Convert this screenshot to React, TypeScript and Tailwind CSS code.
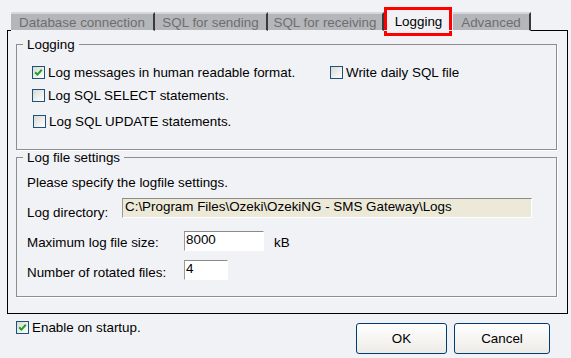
import type { ReactNode } from 'react';

const TABS = [
  { label: 'Database connection', w: 'w-[144px]' },
  { label: 'SQL for sending', w: 'w-[113px]' },
  { label: 'SQL for receiving', w: 'w-[116px]' },
  { label: 'Logging', w: 'w-[69px]', active: true },
  { label: 'Advanced', w: 'w-[78px]' },
];

function Box({ checked }: { checked?: boolean }) {
  return (
    <span className="flex h-[13px] w-[13px] shrink-0 items-center justify-center border border-[#1c5180] bg-linear-to-br from-[#d9d9d3] to-white">
      {checked && (
        <svg width="9" height="9" viewBox="0 0 9 9">
          <path d="M1.2 4.2 L3.4 6.6 L7.8 1.8" stroke="#21a121" strokeWidth="2" fill="none" />
        </svg>
      )}
    </span>
  );
}

function CheckRow({ checked, children, className = '' }: { checked?: boolean; children: ReactNode; className?: string }) {
  return (
    <label className={`flex h-[15px] items-center gap-[3px] ${className}`}>
      <Box checked={checked} />
      <span className="whitespace-nowrap">{children}</span>
    </label>
  );
}

function Field({ children, className = '' }: { children: ReactNode; className?: string }) {
  return (
    <div
      className={`h-[20px] overflow-hidden whitespace-nowrap border-t border-l border-t-[#8a8a8a] border-l-[#9a9a9a] border-r border-b border-r-white border-b-white pl-[1px] leading-[15px] ${className}`}
    >
      {children}
    </div>
  );
}

function Button({ children, className = '' }: { children: ReactNode; className?: string }) {
  return (
    <button
      type="button"
      className={`h-[31px] rounded-[3px] border border-[#003c74] bg-linear-to-b from-white to-[#ecebe6] text-[13.4px] text-black ${className}`}
    >
      {children}
    </button>
  );
}

export default function App() {
  return (
    <div className="relative flex h-[358px] w-[571px] flex-col overflow-hidden bg-[#f1f2f6] pl-[7px] pr-[3px] pt-[12px] font-['Liberation_Sans',Arial,sans-serif] text-[13.4px] leading-[15px] text-black">
      {/* Tabs */}
      <div className="relative z-10 -mb-px ml-[4px] flex h-[19px]">
        {TABS.map((t) =>
          t.active ? (
            <div key={t.label} className={`${t.w} flex items-center justify-center border-b border-b-[#f1f2f6]`}>
              {t.label}
            </div>
          ) : (
            <div
              key={t.label}
              className={`${t.w} flex items-center justify-center border-t-2 border-r-2 border-b border-t-[#d6d7db] border-r-[#3a3a3a] border-b-[#f1f2f6] bg-[#b5b6ba] text-[#6e6e6e]`}
            >
              {t.label}
            </div>
          ),
        )}
      </div>

      {/* Panel */}
      <div className="h-[284px] border border-black pl-[8px] pr-[10px] pt-[6px]">
        <fieldset className="h-[113px] border border-[#8e8e8e] shadow-[1px_1px_0_#fff]">
          <legend className="ml-[6px] px-[4px] leading-[15px]">Logging</legend>
          <div className="flex pl-[15px] pt-[13px]">
            <div className="flex w-[298px] flex-col">
              <CheckRow checked>Log messages in human readable format.</CheckRow>
              <CheckRow className="mt-[8px]">Log SQL SELECT statements.</CheckRow>
              <CheckRow className="mt-[11px] pl-[1px]">Log SQL UPDATE statements.</CheckRow>
            </div>
            <div className="flex flex-col">
              <CheckRow>Write daily SQL file</CheckRow>
            </div>
          </div>
        </fieldset>

        <fieldset className="h-[147px] border border-[#8e8e8e] shadow-[1px_1px_0_#fff]">
          <legend className="ml-[6px] px-[4px] leading-[15px]">Log file settings</legend>
          <div className="flex flex-col pl-[10px] pt-[10px]">
            <p>Please specify the logfile settings.</p>
            <div className="mt-[8px] flex items-start">
              <span className="w-[95px] pt-[7px]">Log directory:</span>
              <Field className="w-[410px] bg-[#ece9d8] pl-[2px]">C:\Program Files\Ozeki\OzekiNG - SMS Gateway\Logs</Field>
            </div>
            <div className="mt-[11px] flex items-start">
              <span className="w-[157px] pt-[4px]">Maximum log file size:</span>
              <Field className="w-[80px] bg-white">8000</Field>
              <span className="ml-[10px] pt-[4px]">kB</span>
            </div>
            <div className="mt-[9px] flex items-start">
              <span className="w-[157px] pt-[5px]">Number of rotated files:</span>
              <Field className="h-[19px] w-[44px] bg-white">4</Field>
            </div>
          </div>
        </fieldset>
      </div>

      {/* Footer */}
      <div className="ml-[9px] flex items-start justify-between pr-[18px]">
        <CheckRow checked className="mt-[6px]">Enable on startup.</CheckRow>
        <div className="mt-[9px] flex gap-[7px]">
          <Button className="w-[91px]">OK</Button>
          <Button className="w-[96px]">Cancel</Button>
        </div>
      </div>

      {/* highlight around the active tab */}
      <div className="absolute left-[384px] top-[7px] h-[29px] w-[68px] border-[3px] border-[#ff0000]" />
    </div>
  );
}
